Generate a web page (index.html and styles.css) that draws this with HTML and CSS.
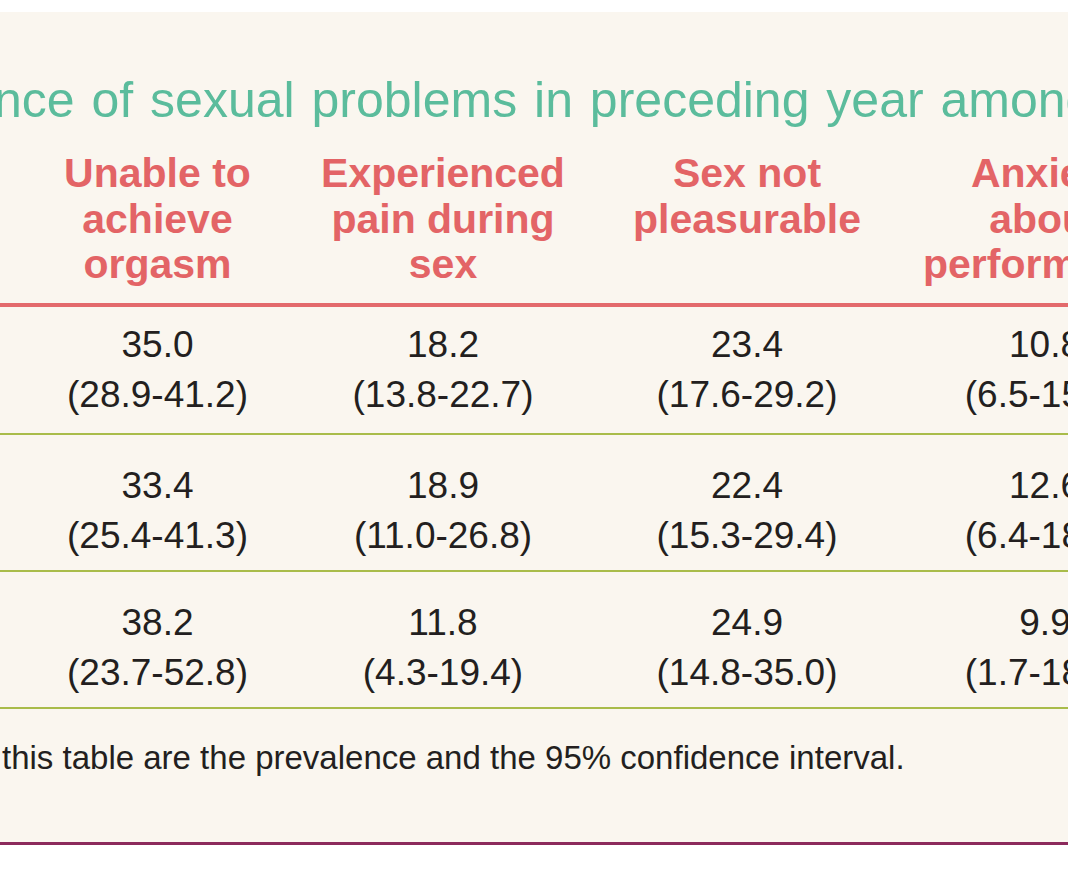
FILE: index.html
```html
<!DOCTYPE html>
<html lang="en">
<head>
<meta charset="utf-8">
<title>Prevalence of sexual problems</title>
<link rel="stylesheet" href="styles.css">
</head>
<body>
<div class="page">
  <div class="sheet">
    <h1 class="title">nce of sexual problems in preceding year among</h1>
    <div class="table">
      <div class="row head">
        <div class="cell">Unable to<br>achieve<br>orgasm</div>
        <div class="cell">Experienced<br>pain during<br>sex</div>
        <div class="cell">Sex not<br>pleasurable</div>
        <div class="cell">Anxiety<br>about<br>performance</div>
      </div>
      <div class="row data first">
        <div class="cell">35.0<br>(28.9-41.2)</div>
        <div class="cell">18.2<br>(13.8-22.7)</div>
        <div class="cell">23.4<br>(17.6-29.2)</div>
        <div class="cell">10.8<br>(6.5-15.1)</div>
      </div>
      <div class="row data">
        <div class="cell">33.4<br>(25.4-41.3)</div>
        <div class="cell">18.9<br>(11.0-26.8)</div>
        <div class="cell">22.4<br>(15.3-29.4)</div>
        <div class="cell">12.6<br>(6.4-18.8)</div>
      </div>
      <div class="row data">
        <div class="cell">38.2<br>(23.7-52.8)</div>
        <div class="cell">11.8<br>(4.3-19.4)</div>
        <div class="cell">24.9<br>(14.8-35.0)</div>
        <div class="cell">9.9<br>(1.7-18.1)</div>
      </div>
    </div>
    <p class="note">this table are the prevalence and the 95% confidence interval.</p>
  </div>
</div>
</body>
</html>
```

FILE: styles.css
```css
html, body {
  margin: 0;
  padding: 0;
  background: #ffffff;
}

body {
  font-family: "Liberation Sans", Arial, sans-serif;
  color: #231f20;
}

.page {
  width: 1068px;
  height: 869px;
  overflow: hidden;
  padding-top: 12px;
  box-sizing: border-box;
}

.sheet {
  background: #faf6ef;
  padding-top: 58px;
  border-bottom: 3px solid #8c2a5c;
}

.title {
  margin: 0 0 0 -6px;
  font-size: 50px;
  font-weight: normal;
  line-height: 60px;
  color: #5bbc9c;
  white-space: nowrap;
  word-spacing: 3px;
}

.row {
  display: grid;
  grid-template-columns: 315px 256px 352px 244px;
  text-align: center;
  white-space: nowrap;
}

.head {
  padding: 21px 0 15px;
  font-size: 41px;
  font-weight: bold;
  line-height: 45.5px;
  color: #e36466;
  border-bottom: 4px solid #e36a6c;
}

.data {
  padding: 26px 0 9px;
  font-size: 37px;
  line-height: 50px;
  border-bottom: 2px solid #a9bc4a;
}

.data.first {
  padding: 13px 0 13px;
}

.note {
  margin: 0;
  padding: 29px 0 64px 2px;
  font-size: 33px;
  line-height: 40px;
  white-space: nowrap;
}
```
